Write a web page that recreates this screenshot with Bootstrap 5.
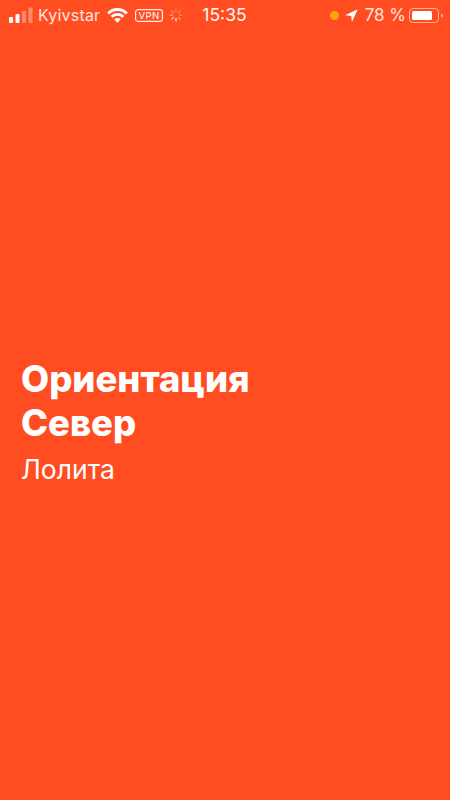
<!DOCTYPE html>
<html lang="ru">
<head>
<meta charset="utf-8">
<title>Ориентация Север</title>
<link href="https://cdn.jsdelivr.net/npm/bootstrap@5.3.0/dist/css/bootstrap.min.css" rel="stylesheet">
<style>
html, body { height: 100%; }
body { background: #ff4d21; color: #fff; font-family: Inter, "Liberation Sans", sans-serif; overflow: hidden; }
.screen { height: 800px; }
.status-row { height: 30px; padding: 0 7px 0 9px; line-height: 30px; }
.status-carrier { margin-left: 5px; opacity: .85; font-size: 16px; letter-spacing: .2px; }
.status-wifi { margin-left: 7px; }
.status-vpn { margin-left: 7px; }
.status-spin { margin-left: 6px; }
.status-time { font-size: 17.5px; margin-left: 19px; opacity: .95; }
.status-pct { font-size: 17px; opacity: .85; margin-left: 7px; }
.status-arrow { margin-left: 6px; }
.status-batt { margin-left: 3px; }
.rec-dot { width: 9px; height: 9px; border-radius: 50%; background: #ffa30f; }
.hero-block { padding: 0 21px; margin-top: 327px; }
.hero-title { font-size: 36.4px; line-height: 44px; font-weight: 800; margin: 0; }
.hero-sub { font-size: 26.5px; line-height: 32px; font-weight: 400; margin: 8px 0 0; }
</style>
</head>
<body>
<div class="screen d-flex flex-column">
  <div class="status-row d-flex align-items-center">
    <svg width="24" height="16" viewBox="0 0 24 16" aria-hidden="true"><g fill="#fff"><rect x="0" y="10" width="4" height="6" rx="1"/><rect x="6.5" y="7" width="4" height="9" rx="1"/></g><g fill="#fff" opacity=".35"><rect x="13" y="4" width="4" height="12" rx="1"/><rect x="19.5" y="0.5" width="4" height="15.5" rx="1"/></g></svg>
    <span class="status-carrier">Kyivstar</span>
    <svg class="status-wifi" width="21" height="15" viewBox="0 0 21 15" aria-hidden="true"><g fill="none" stroke="#fff" stroke-width="2.8"><path d="M1.2 5.4a13 13 0 0 1 18.6 0"/><path d="M4.6 8.8a8.3 8.3 0 0 1 11.8 0"/></g><path d="M7.2 11.3a4.6 4.6 0 0 1 6.6 0L10.5 14.8z" fill="#fff"/></svg>
    <svg class="status-vpn" width="28" height="13" viewBox="0 0 28 13" role="img" aria-label="VPN"><rect x=".6" y=".6" width="26.8" height="11.8" rx="2.5" fill="none" stroke="#fff" stroke-opacity=".9" stroke-width="1.2"/><text x="14" y="10" text-anchor="middle" font-family="Inter, sans-serif" font-size="9.5" font-weight="500" letter-spacing=".4" fill="#fff" fill-opacity=".9">VPN</text></svg>
    <svg class="status-spin" width="14" height="14" viewBox="0 0 14 14" aria-hidden="true"><g stroke="#fff" stroke-width="1.2" stroke-linecap="round"><path d="M7 1v2.6" opacity=".3"/><path d="M11.2 2.8 9.4 4.6" opacity=".35"/><path d="M13 7h-2.6" opacity=".4"/><path d="M11.2 11.2 9.4 9.4" opacity=".5"/><path d="M7 13v-2.6" opacity=".9"/><path d="M2.8 11.2l1.8-1.8" opacity=".75"/><path d="M1 7h2.6" opacity=".6"/><path d="M2.8 2.8l1.8 1.8" opacity=".4"/></g></svg>
    <span class="status-time">15:35</span>
    <span class="rec-dot ms-auto"></span>
    <svg class="status-arrow" width="13" height="13" viewBox="0 0 13 13" aria-hidden="true"><path d="M12.8.2 0 6.2l6.2.7.7 6.1z" fill="#fff"/></svg>
    <span class="status-pct">78 %</span>
    <svg class="status-batt" width="34" height="15" viewBox="0 0 34 15" aria-hidden="true"><rect x=".5" y=".5" width="29" height="14" rx="3.5" fill="none" stroke="#fff" stroke-opacity=".55"/><rect x="3" y="3" width="20" height="9" rx="1.5" fill="#fff"/><path d="M32 5.5a2 2 0 0 1 0 4z" fill="#fff" fill-opacity=".5"/></svg>
  </div>
  <div class="hero-block">
    <h1 class="hero-title">Ориентация<br>Север</h1>
    <p class="hero-sub">Лолита</p>
  </div>
</div>
<script src="https://cdn.jsdelivr.net/npm/bootstrap@5.3.0/dist/js/bootstrap.bundle.min.js"></script>
</body>
</html>
